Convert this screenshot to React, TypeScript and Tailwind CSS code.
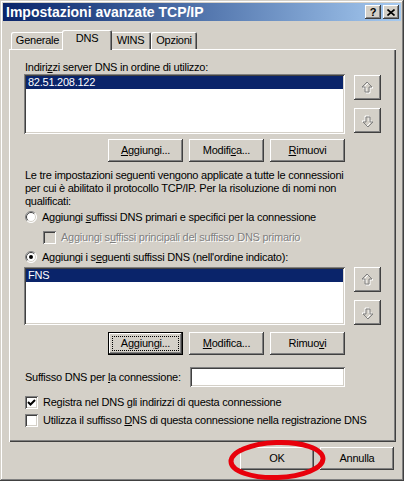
import React from "react";

const raised =
  "bg-[#d4d0c8] shadow-[inset_-1px_-1px_#404040,inset_1px_1px_#fff,inset_-2px_-2px_#808080,inset_2px_2px_#d4d0c8]";
const sunken =
  "shadow-[inset_1px_1px_#808080,inset_-1px_-1px_#fff,inset_2px_2px_#404040,inset_-2px_-2px_#d4d0c8]";

// underlined accelerator letter
const U = ({ children }: { children: React.ReactNode }) => (
  <span className="underline underline-offset-[1px] decoration-1">{children}</span>
);

const Btn = ({
  children,
  w = "w-[75px]",
  focused = false,
}: {
  children: React.ReactNode;
  w?: string;
  focused?: boolean;
}) =>
  focused ? (
    <div className={`${w} h-[23px] border border-black bg-[#d4d0c8]`}>
      <div className={`${raised} h-full w-full p-[3px]`}>
        <div className="h-full w-full border border-dotted border-black flex items-center justify-center leading-none">
          {children}
        </div>
      </div>
    </div>
  ) : (
    <div className={`${w} h-[23px] ${raised} flex items-center justify-center leading-none`}>
      {children}
    </div>
  );

// hollow arrow used on the move up / move down buttons
const ArrowBtn = ({ down = false }: { down?: boolean }) => (
  <div className={`w-[27px] h-[25px] ${raised} flex items-center justify-center`}>
    <svg width="13" height="14" viewBox="0 0 13 14" className={down ? "rotate-180" : ""}>
      <polygon points="7,2 12,7 9,7 9,12 5,12 5,7 2,7" fill="none" stroke="#fff" />
      <polygon points="6,1 11,6 8,6 8,11 4,11 4,6 1,6" fill="none" stroke="#808080" />
    </svg>
  </div>
);

const Radio = ({ checked = false }: { checked?: boolean }) => (
  <svg width="12" height="12" viewBox="0 0 12 12" className="shrink-0">
    <circle cx="6" cy="6" r="5.5" fill="#fff" />
    <path d="M2.1 9.9 A5.5 5.5 0 0 1 9.9 2.1" stroke="#808080" fill="none" />
    <path d="M9.9 2.1 A5.5 5.5 0 0 1 2.1 9.9" stroke="#fff" fill="none" />
    <path d="M2.8 9.2 A4.5 4.5 0 0 1 9.2 2.8" stroke="#404040" fill="none" />
    <path d="M9.2 2.8 A4.5 4.5 0 0 1 2.8 9.2" stroke="#d4d0c8" fill="none" />
    {checked && <circle cx="6" cy="6" r="2" fill="#000" />}
  </svg>
);

const Check = ({ checked = false, disabled = false }: { checked?: boolean; disabled?: boolean }) => (
  <div
    className={`w-[13px] h-[13px] shrink-0 ${sunken} ${disabled ? "bg-[#d4d0c8]" : "bg-white"} flex items-center justify-center`}
  >
    {checked && (
      <svg width="9" height="9" viewBox="0 0 9 9">
        <polyline points="1,4 3.5,6.5 8,2" fill="none" stroke="#000" strokeWidth="2" />
      </svg>
    )}
  </div>
);

const Tab = ({
  children,
  w,
  selected = false,
}: {
  children: React.ReactNode;
  w: string;
  selected?: boolean;
}) => (
  <div
    className={`${w} ${
      selected ? "h-[20px] -mx-[2px] -mb-px relative z-10 pb-[3px]" : "h-[17px]"
    } bg-[#d4d0c8] rounded-t-[2px] shadow-[inset_1px_1px_#fff,inset_-1px_0_#404040,inset_-2px_0_#808080] flex items-center justify-center`}
  >
    {children}
  </div>
);

const ListBox = ({ item, h }: { item: string; h: string }) => (
  <div className={`w-[321px] ${h} bg-white ${sunken} p-[2px]`}>
    <div className="h-[13px] bg-[#0a246a] text-white leading-[13px] pl-[2px]">{item}</div>
  </div>
);

export default function App() {
  return (
    <div className="relative w-[404px] h-[481px] bg-[#d4d0c8] p-[3px] shadow-[inset_-1px_-1px_#404040,inset_1px_1px_#d4d0c8,inset_-2px_-2px_#808080,inset_2px_2px_#fff] font-['Liberation_Sans',Arial,sans-serif] text-[11px] tracking-[-0.25px] text-black overflow-hidden">
      {/* --- Title bar --- */}
      <div className="h-[18px] flex items-center justify-between pl-[3px] pr-[2px] bg-linear-to-r from-[#0a246a] to-[#a6caf0]">
        <span className="text-white font-bold text-[14px] tracking-normal leading-none">
          Impostazioni avanzate TCP/IP
        </span>
        <div className="flex gap-[2px]">
          <div className={`w-[16px] h-[14px] ${raised} flex items-center justify-center font-bold text-[11px] leading-none`}>
            ?
          </div>
          <div className={`w-[16px] h-[14px] ${raised} flex items-center justify-center`}>
            <svg width="8" height="7" viewBox="0 0 8 7">
              <path d="M0.5 0.5 L7.5 6.5 M7.5 0.5 L0.5 6.5" stroke="#000" strokeWidth="1.6" />
            </svg>
          </div>
        </div>
      </div>

      {/* --- Tabs --- */}
      <div className="mt-[9px] h-[19px] flex items-end pl-[8px]">
        <Tab w="w-[53px]">Generale</Tab>
        <Tab w="w-[50px]" selected>
          DNS
        </Tab>
        <Tab w="w-[41px]">WINS</Tab>
        <Tab w="w-[46px]">Opzioni</Tab>
      </div>

      {/* --- Tab panel --- */}
      <div className="ml-[6px] w-[387px] h-[393px] shadow-[inset_1px_1px_#fff,inset_-1px_-1px_#404040,inset_-2px_-2px_#808080] pl-[15px] pt-[12px]">
        <div className="h-[13px] leading-[13px] pl-px">
          Indiri<U>z</U>zi server DNS in ordine di utilizzo:
        </div>
        <div className="flex">
          <ListBox item="82.51.208.122" h="h-[60px]" />
          <div className="ml-[9px] pt-px flex flex-col gap-[8px]">
            <ArrowBtn />
            <ArrowBtn down />
          </div>
        </div>
        <div className="mt-[5px] w-[321px] flex justify-end gap-[6px]">
          <Btn>
            <U>A</U>ggiungi...
          </Btn>
          <Btn>
            Modifi<U>c</U>a...
          </Btn>
          <Btn>
            <U>R</U>imuovi
          </Btn>
        </div>

        <p className="mt-[7px] pl-px leading-[13px] whitespace-nowrap">
          Le tre impostazioni seguenti vengono applicate a tutte le connessioni
          <br />
          per cui è abilitato il protocollo TCP/IP. Per la risoluzione di nomi non
          <br />
          qualificati:
        </p>

        <div className="mt-px h-[16px] flex items-center gap-[5px] pl-px">
          <Radio />
          <span>
            Aggiungi <U>s</U>uffissi DNS primari e specifici per la connessione
          </span>
        </div>
        <div className="mt-[4px] h-[16px] flex items-center gap-[5px] pl-[19px]">
          <Check disabled />
          <span className="text-[#808080] [text-shadow:1px_1px_#fff]">
            Aggiungi s<U>u</U>ffissi principali del suffisso DNS primario
          </span>
        </div>
        <div className="mt-[4px] h-[16px] flex items-center gap-[5px] pl-px">
          <Radio checked />
          <span>
            Aggiungi i s<U>e</U>guenti suffissi DNS (nell'ordine indicato):
          </span>
        </div>

        <div className="mt-[2px] flex">
          <ListBox item="FNS" h="h-[58px]" />
          <div className="ml-[9px] flex flex-col gap-[8px]">
            <ArrowBtn />
            <ArrowBtn down />
          </div>
        </div>
        <div className="mt-[7px] w-[321px] flex justify-end gap-[6px]">
          <Btn focused>
            Aggiun<U>g</U>i...
          </Btn>
          <Btn>
            <U>M</U>odifica...
          </Btn>
          <Btn>
            Rimuo<U>v</U>i
          </Btn>
        </div>

        <div className="mt-[12px] w-[321px] h-[20px] flex items-center">
          <span className="pl-px">
            Suffisso DNS per <U>l</U>a connessione:
          </span>
          <div className={`ml-auto w-[155px] h-[20px] bg-white ${sunken}`} />
        </div>

        <div className="mt-[7px] h-[16px] flex items-center gap-[5px] pl-px">
          <Check checked />
          <span>
            Re<U>g</U>istra nel DNS gli indirizzi di questa connessione
          </span>
        </div>
        <div className="mt-[2px] h-[16px] flex items-center gap-[5px] pl-px">
          <Check />
          <span>
            Utilizza il suffisso <U>D</U>NS di questa connessione nella registrazione DNS
          </span>
        </div>
      </div>

      {/* --- Dialog buttons --- */}
      <div className="mt-[5px] flex justify-end gap-[6px] pr-[7px]">
        <Btn w="w-[74px]">OK</Btn>
        <Btn w="w-[74px]">Annulla</Btn>
      </div>

      {/* red marker drawn over the OK button */}
      <svg className="absolute left-0 top-0 pointer-events-none" width="404" height="481">
        <ellipse
          cx="277"
          cy="460"
          rx="46"
          ry="17.5"
          fill="none"
          stroke="#e8000b"
          strokeWidth="5"
          transform="rotate(-2 277 460)"
        />
      </svg>
    </div>
  );
}
